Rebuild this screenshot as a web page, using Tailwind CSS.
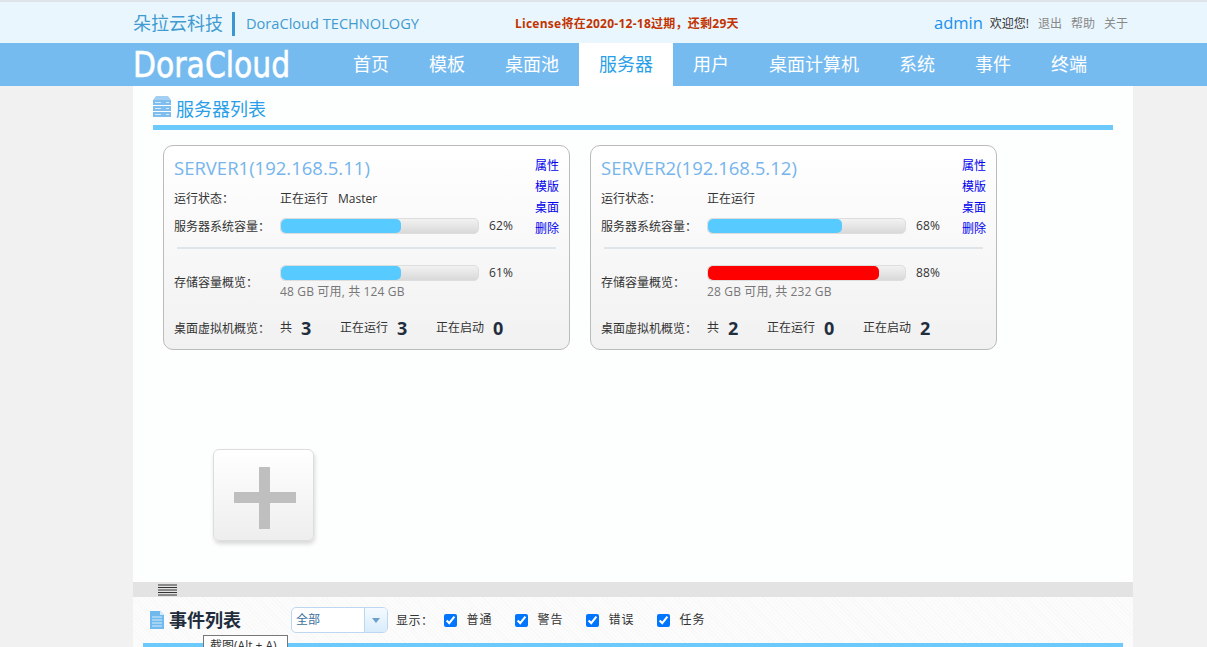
<!DOCTYPE html>
<html lang="zh-CN">
<head>
  <meta charset="UTF-8">
  <title>DoraCloud</title>
  <script src="https://cdn.jsdelivr.net/npm/@tailwindcss/browser@4"></script>
</head>
<body class="h-[647px] overflow-hidden bg-[#f1f1f1] text-[12px] text-[#333] font-['Open_Sans','Noto_Sans_CJK_SC',sans-serif]">
  <!-- top bar -->
  <header class="h-[43px] border-t-2 border-[#dfe3ea] bg-[#eaf6fd]">
    <div class="flex h-[41px] items-center pt-[2px] pl-[133px]">
      <span class="text-[18px] text-[#3f9bd1]">朵拉云科技</span>
      <span class="ml-[9px] h-[24px] w-[3px] bg-[#3a97cf]"></span>
      <span class="ml-[11px] w-[269px] text-[14.6px] text-[#3f9bd1]">DoraCloud TECHNOLOGY</span>
      <span class="w-[419px] font-bold tracking-[0.25px] text-[#c23300]">License将在2020-12-18过期<span class="font-['Noto_Sans_CJK_TC']">，</span>还剩29天</span>
      <span class="text-[16.5px] text-[#1a90f0]">admin</span>
      <span class="ml-[7px]">欢迎您!</span>
      <span class="ml-[9px] text-[#888]">退出</span>
      <span class="ml-[9px] text-[#888]">帮助</span>
      <span class="ml-[9px] text-[#888]">关于</span>
    </div>
  </header>

  <!-- main nav -->
  <nav class="flex h-[43px] items-stretch bg-[#76bbf0] pl-[133px] text-[18px] text-white">
    <span class="w-[200px] origin-left scale-x-[.83] self-center font-['DejaVu_Sans',sans-serif] text-[36px] leading-none [-webkit-text-stroke:0.6px_white]">DoraCloud</span>
    <a class="flex items-center px-5">首页</a>
    <a class="flex items-center px-5">模板</a>
    <a class="flex items-center px-5">桌面池</a>
    <a class="flex items-center bg-white px-5 text-[#2a9fe8]">服务器</a>
    <a class="flex items-center px-5">用户</a>
    <a class="flex items-center px-5">桌面计算机</a>
    <a class="flex items-center px-5">系统</a>
    <a class="flex items-center px-5">事件</a>
    <a class="flex items-center px-5">终端</a>
  </nav>

  <div class="relative mx-[133px] w-[1000px]">
    <!-- server section -->
    <main class="h-[496px] bg-[#fdfefe] px-5 pt-[10px]">
      <div class="flex h-[34px] items-start gap-[5px] border-b-[5px] border-[#6cc9fb]">
        <svg width="18" height="21" viewBox="0 0 18 21">
          <path d="M3 0h12l3 4H0z" fill="#a3d0f2"/>
          <rect y="4" width="18" height="5" fill="#7fbdee"/>
          <rect y="10" width="18" height="5" fill="#7fbdee"/>
          <rect y="16" width="18" height="5" fill="#7fbdee"/>
          <path d="M2 6.500h6M2 12.500h6M2 18.500h6M13 6.500h3M13 12.500h3M13 18.500h3" stroke="#d5ebfb" stroke-width="1"/>
        </svg>
        <h2 class="text-[18px] leading-[26px] text-[#2a9fe8]">服务器列表</h2>
      </div>

      <div class="mt-[15px] flex gap-5 pl-[10px]">
        <section class="h-[205px] w-[407px] rounded-[10px] border border-[#bbb] bg-linear-to-b from-white to-[#f1f1f1] px-[10px] pt-[8px]">
          <div class="flex">
            <div class="w-[360px]">
              <div class="h-[28px] text-[18.5px] leading-[28px] text-[#76b5ec]">SERVER1(192.168.5.11)</div>
              <div class="mt-[6px] flex h-[21px] items-center"><span class="w-[106px]">运行状态<span class="font-['Noto_Sans_CJK_TC']">：</span></span><span>正在运行</span><span class="ml-[10px]">Master</span></div>
              <div class="mt-[7px] flex h-[20px] items-center">
                <span class="w-[106px]">服务器系统容量<span class="font-['Noto_Sans_CJK_TC']">：</span></span>
                <div class="h-[16px] w-[199px] overflow-hidden rounded-[5px] border border-[#ddd] bg-linear-to-b from-[#f2f2f2] to-[#d9d9d9]"><div class="h-full rounded-[5px] bg-[#57caff]" style="width:61%"></div></div>
                <span class="ml-[10px] tracking-[0.15px]">62%</span>
              </div>
            </div>
            <div class="flex flex-col gap-[7px] pt-[5px] pl-px leading-[14px] text-[#0000ee]"><a>属性</a><a>模版</a><a>桌面</a><a>删除</a></div>
          </div>
          <div class="mx-[3px] mt-[11px] h-[2px] bg-[#dfe3ea]"></div>
          <div class="mt-[16px] flex">
            <span class="w-[106px] pt-[8px]">存储容量概览<span class="font-['Noto_Sans_CJK_TC']">：</span></span>
            <div>
              <div class="flex h-[16px] items-center">
                <div class="h-[16px] w-[199px] overflow-hidden rounded-[5px] border border-[#ddd] bg-linear-to-b from-[#f2f2f2] to-[#d9d9d9]"><div class="h-full rounded-[5px] bg-[#57caff]" style="width:61%"></div></div>
                <span class="ml-[10px] tracking-[0.15px]">61%</span>
              </div>
              <div class="mt-[2px] tracking-[0.15px] text-[#777]">48 GB 可用, 共 124 GB</div>
            </div>
          </div>
          <div class="mt-[14px] flex h-[26px] items-center">
            <span class="w-[106px]">桌面虚拟机概览<span class="font-['Noto_Sans_CJK_TC']">：</span></span>
            <span>共</span><b class="ml-[9px] w-[39px] text-[18px] text-[#1f2d3d]">3</b>
            <span>正在运行</span><b class="ml-[9px] w-[39px] text-[18px] text-[#1f2d3d]">3</b>
            <span>正在启动</span><b class="ml-[9px] text-[18px] text-[#1f2d3d]">0</b>
          </div>
        </section>

        <section class="h-[205px] w-[407px] rounded-[10px] border border-[#bbb] bg-linear-to-b from-white to-[#f1f1f1] px-[10px] pt-[8px]">
          <div class="flex">
            <div class="w-[360px]">
              <div class="h-[28px] text-[18.5px] leading-[28px] text-[#76b5ec]">SERVER2(192.168.5.12)</div>
              <div class="mt-[6px] flex h-[21px] items-center"><span class="w-[106px]">运行状态<span class="font-['Noto_Sans_CJK_TC']">：</span></span><span>正在运行</span></div>
              <div class="mt-[7px] flex h-[20px] items-center">
                <span class="w-[106px]">服务器系统容量<span class="font-['Noto_Sans_CJK_TC']">：</span></span>
                <div class="h-[16px] w-[199px] overflow-hidden rounded-[5px] border border-[#ddd] bg-linear-to-b from-[#f2f2f2] to-[#d9d9d9]"><div class="h-full rounded-[5px] bg-[#57caff]" style="width:68%"></div></div>
                <span class="ml-[10px] tracking-[0.15px]">68%</span>
              </div>
            </div>
            <div class="flex flex-col gap-[7px] pt-[5px] pl-px leading-[14px] text-[#0000ee]"><a>属性</a><a>模版</a><a>桌面</a><a>删除</a></div>
          </div>
          <div class="mx-[3px] mt-[11px] h-[2px] bg-[#dfe3ea]"></div>
          <div class="mt-[16px] flex">
            <span class="w-[106px] pt-[8px]">存储容量概览<span class="font-['Noto_Sans_CJK_TC']">：</span></span>
            <div>
              <div class="flex h-[16px] items-center">
                <div class="h-[16px] w-[199px] overflow-hidden rounded-[5px] border border-[#ddd] bg-linear-to-b from-[#f2f2f2] to-[#d9d9d9]"><div class="h-full rounded-[5px] bg-[#ff0000]" style="width:87%"></div></div>
                <span class="ml-[10px] tracking-[0.15px]">88%</span>
              </div>
              <div class="mt-[2px] tracking-[0.15px] text-[#777]">28 GB 可用, 共 232 GB</div>
            </div>
          </div>
          <div class="mt-[14px] flex h-[26px] items-center">
            <span class="w-[106px]">桌面虚拟机概览<span class="font-['Noto_Sans_CJK_TC']">：</span></span>
            <span>共</span><b class="ml-[9px] w-[39px] text-[18px] text-[#1f2d3d]">2</b>
            <span>正在运行</span><b class="ml-[9px] w-[39px] text-[18px] text-[#1f2d3d]">0</b>
            <span>正在启动</span><b class="ml-[9px] text-[18px] text-[#1f2d3d]">2</b>
          </div>
        </section>
      </div>

      <button class="mt-[99px] ml-[60px] flex h-[92px] w-[101px] items-center justify-center rounded-[6px] border border-[#ddd] bg-linear-to-b from-white to-[#eee] pt-[5px] pl-[2px] shadow-[1px_3px_4px_rgba(0,0,0,0.15)]">
        <svg width="62" height="62" viewBox="0 0 62 62"><path d="M25 0h11v25h26v11H36v26H25V36H0V25h25z" fill="#bfbfbf"/></svg>
      </button>
    </main>

    <!-- splitter -->
    <div class="flex h-[15px] items-center bg-[#e3e3e3] pl-[25px]">
      <svg width="19" height="12" viewBox="0 0 19 12"><path d="M0 1h19M0 3.500h19M0 6h19M0 8.500h19M0 11h19" stroke="#333" stroke-width="1"/></svg>
    </div>

    <!-- events section -->
    <section class="h-[50px] bg-[#fcfcfc] bg-[repeating-linear-gradient(45deg,#f8f8f8_0_1px,transparent_1px_3px)] px-[10px]">
      <div class="flex h-[46px] items-center">
        <svg class="ml-[7px]" width="14" height="18" viewBox="0 0 14 18"><path d="M0 0h10l4 4v14H0z" fill="#6fb9ee"/><path d="M10 0l4 4h-4z" fill="#d7ecfb"/><path d="M2 6h10M2 9h10M2 12h10M2 15h10" stroke="#d7ecfb"/></svg>
        <h2 class="ml-[5px] w-[122px] text-[18px] font-bold text-[#1f2d3d]">事件列表</h2>
        <div class="flex h-[26px] w-[97px] overflow-hidden rounded-[5px] border border-[#bcd8f0] bg-white">
          <span class="flex-1 pl-1 leading-[24px] text-[#3b6f9a]">全部</span>
          <span class="flex w-[23px] items-center justify-center border-l border-[#bcd8f0] bg-linear-to-b from-[#f4fafe] to-[#d9ecfb]"><span class="border-x-[4px] border-t-[5px] border-x-transparent border-t-[#6b9fc9]"></span></span>
        </div>
        <span class="ml-[8px] tracking-[0.5px]">显示<span class="font-['Noto_Sans_CJK_TC']">：</span></span>
        <label class="ml-[10px] flex items-center gap-[10px] tracking-[1px]"><input type="checkbox" checked class="size-[13px] accent-[#0075ff]">普通</label>
        <label class="ml-[22px] flex items-center gap-[10px] tracking-[1px]"><input type="checkbox" checked class="size-[13px] accent-[#0075ff]">警告</label>
        <label class="ml-[22px] flex items-center gap-[10px] tracking-[1px]"><input type="checkbox" checked class="size-[13px] accent-[#0075ff]">错误</label>
        <label class="ml-[22px] flex items-center gap-[10px] tracking-[1px]"><input type="checkbox" checked class="size-[13px] accent-[#0075ff]">任务</label>
      </div>
      <div class="h-[4px] bg-[#6cc9fb]"></div>
    </section>

    <!-- screenshot tool tooltip -->
    <div class="absolute top-[549px] left-[70px] h-[20px] w-[85px] border border-[#777] bg-white pl-[6px] text-[12px] leading-[20px]">截图(Alt + A)</div>
  </div>
</body>
</html>
